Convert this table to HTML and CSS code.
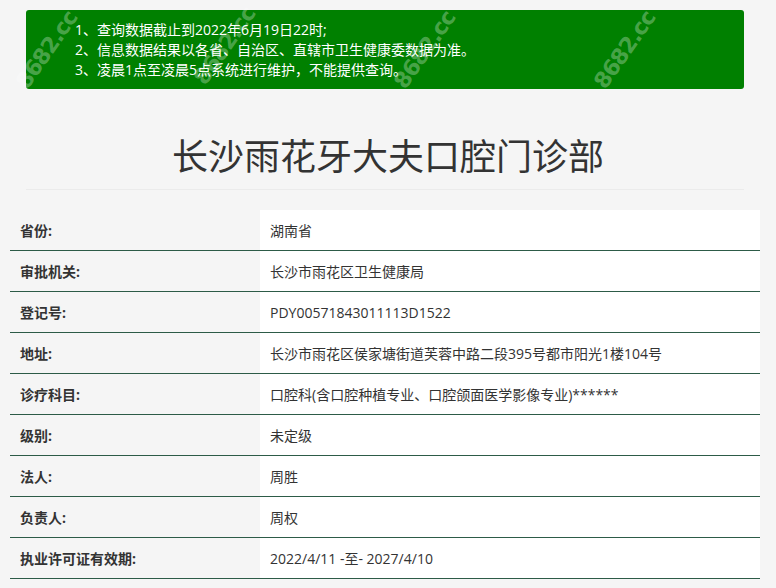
FILE: index.html
```html
<!DOCTYPE html>
<html lang="zh-CN">
<head>
<meta charset="utf-8">
<title>长沙雨花牙大夫口腔门诊部</title>
<link rel="stylesheet" href="styles.css">
</head>
<body>
<div class="notice">
  <p>1、查询数据截止到2022年6月19日22时;</p>
  <p>2、信息数据结果以各省、自治区、直辖市卫生健康委数据为准。</p>
  <p>3、凌晨1点至凌晨5点系统进行维护，不能提供查询。</p>
  <span class="mark m1">8682.cc</span>
  <span class="mark m2">8682.cc</span>
  <span class="mark m3">8682.cc</span>
  <span class="mark m4">8682.cc</span>
</div>
<h1 class="title">长沙雨花牙大夫口腔门诊部</h1>
<div class="rule"></div>
<table class="info">
  <tr><th>省份:</th><td>湖南省</td></tr>
  <tr><th>审批机关:</th><td>长沙市雨花区卫生健康局</td></tr>
  <tr><th>登记号:</th><td>PDY00571843011113D1522</td></tr>
  <tr><th>地址:</th><td>长沙市雨花区侯家塘街道芙蓉中路二段395号都市阳光1楼104号</td></tr>
  <tr><th>诊疗科目:</th><td>口腔科(含口腔种植专业、口腔颌面医学影像专业)******</td></tr>
  <tr><th>级别:</th><td>未定级</td></tr>
  <tr><th>法人:</th><td>周胜</td></tr>
  <tr><th>负责人:</th><td>周权</td></tr>
  <tr><th>执业许可证有效期:</th><td>2022/4/11 -至- 2027/4/10</td></tr>
</table>
</body>
</html>
```
FILE: styles.css
```css
html, body {
  margin: 0;
  padding: 0;
  background: #f5f5f5;
}
body {
  font-family: "Open Sans", "Noto Sans CJK SC", sans-serif;
  color: #333;
  font-size: 14px;
  padding-top: 10px;
}
.notice {
  position: relative;
  margin: 0 0 0 26px;
  width: 718px;
  height: 79px;
  box-sizing: border-box;
  background: #008000;
  border-radius: 3px;
  padding: 10px 0 0 49px;
  color: #fff;
}
.notice p {
  position: relative;
  z-index: 1;
  margin: 0;
  line-height: 20px;
  font-size: 14px;
}
.mark {
  position: absolute;
  width: 90px;
  height: 28px;
  line-height: 28px;
  text-align: center;
  font-family: "DejaVu Sans", sans-serif;
  font-weight: bold;
  font-size: 22px;
  letter-spacing: -1px;
  color: rgba(255, 255, 255, 0.3);
  transform: rotate(-55deg);
  z-index: 2;
}
.m1 { left: -24px; top: 26px; }
.m2 { left: 154px; top: 22px; }
.m3 { left: 354px; top: 26px; }
.m4 { left: 554px; top: 26px; }
.title {
  margin: 0;
  padding-top: 44px;
  text-align: center;
  font-weight: normal;
  font-size: 36px;
  line-height: 48px;
  color: #333;
}
.rule {
  margin: 8px 0 0 26px;
  width: 718px;
  height: 1px;
  background: #ebebeb;
}
.info {
  margin: 20px 0 0 10px;
  width: 750px;
  border-collapse: collapse;
}
.info th, .info td {
  height: 40px;
  padding: 0 10px;
  border-bottom: 1px solid #2d5b47;
  text-align: left;
  font-size: 14px;
  color: #333;
}
.info th {
  width: 230px;
  font-weight: bold;
  background: #f5f5f5;
}
.info td {
  background: #fff;
}
```
